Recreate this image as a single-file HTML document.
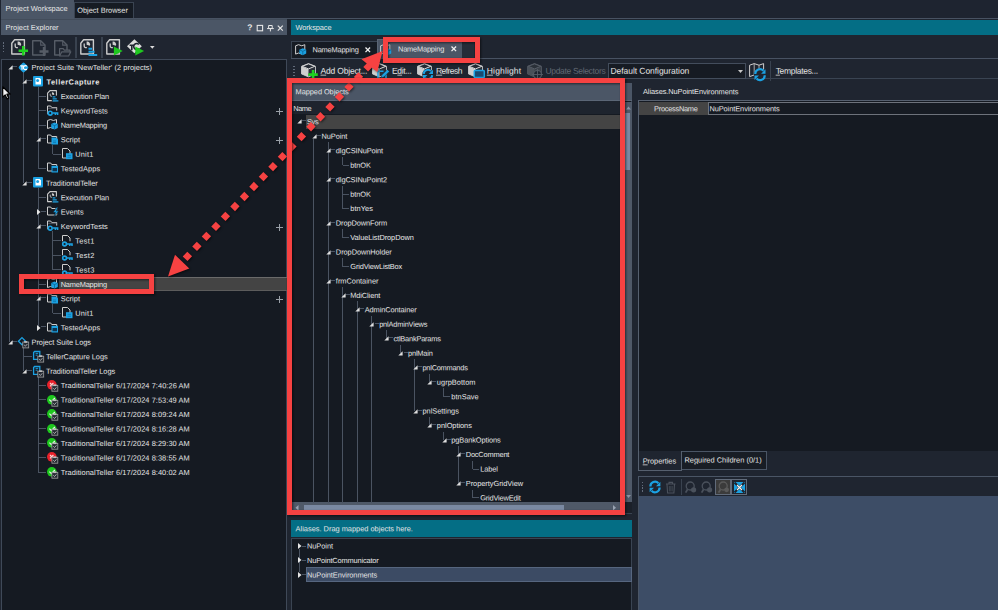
<!DOCTYPE html>
<html><head><meta charset="utf-8"><title>Project Workspace</title>
<style>
html,body{margin:0;padding:0}
body{width:998px;height:610px;overflow:hidden;background:#1f2530;position:relative;font-family:"Liberation Sans",sans-serif;color:#e6e6e6}
div{position:absolute;box-sizing:border-box}
svg{position:absolute;overflow:visible}
text{font-family:"Liberation Sans",sans-serif;white-space:pre}
u{text-decoration:underline;text-underline-offset:1px}
</style></head><body>

<div style="left:0px;top:0px;width:998px;height:19px;background:#1e2430;"></div>
<div style="left:1px;top:0px;width:73px;height:20px;background:#4b5666;"></div>
<div style="left:74px;top:2px;width:60px;height:17px;background:#161b23;border:1px solid #3a4452;border-bottom:none;"></div>
<div style="left:74px;top:18px;width:924px;height:1px;background:#485262;"></div>
<div style="left:1px;top:19px;width:286px;height:1px;background:#424c5a;"></div>
<svg style="left:5px;top:1px" width="67" height="16"><text x="0.6" y="9.9" font-size="7.4" fill="#e6e6e6" transform="rotate(0.03 0.6 9.9)" textLength="62.1">Project Workspace</text></svg>
<svg style="left:77px;top:3px" width="55" height="16"><text x="0.2" y="9.8" font-size="7.4" fill="#e6e6e6" transform="rotate(0.03 0.2 9.8)" textLength="50.7">Object Browser</text></svg>
<div style="left:1px;top:20px;width:286px;height:15px;background:#4b5666;"></div>
<svg style="left:5px;top:21px" width="57" height="16"><text x="0.6" y="9.1" font-size="7.4" fill="#e6e6e6" transform="rotate(0.03 0.6 9.1)" textLength="52.9">Project Explorer</text></svg>
<svg style="left:247px;top:20px" width="10" height="16"><text x="0.3" y="10.3" font-size="8.5" fill="#e6e6e6" transform="rotate(0.03 0.3 10.3)" font-weight="bold">?</text></svg>
<svg style="left:256px;top:24px" width="32" height="9" viewBox="0 0 32 9"><rect x="1.2" y="1.4" width="5.4" height="5.4" fill="none" stroke="#e6e6e6" stroke-width="1.1"/><path d="M12.6 1.5h3.6v3h-3.6zM11 4.6h6.8M14.4 4.6v2.8" fill="none" stroke="#e6e6e6" stroke-width="1"/><path d="M21.8 1.6l5 5M26.8 1.6l-5 5" stroke="#e6e6e6" stroke-width="1.2"/></svg>
<div style="left:1px;top:59px;width:286px;height:552px;background:#151a22;border:1px solid #3f4958;"></div>
<div style="left:59px;top:277px;width:228px;height:14px;background:#444444;border-top:1px solid #6a6a6a;border-bottom:1px solid #5c5c5c;"></div>
<div style="left:9px;top:70px;width:1px;height:272px;background:#4a5361;"></div>
<div style="left:23px;top:72px;width:1px;height:111px;background:#4a5361;"></div>
<div style="left:23px;top:347px;width:1px;height:24px;background:#4a5361;"></div>
<div style="left:38px;top:87px;width:1px;height:82px;background:#4a5361;"></div>
<div style="left:38px;top:188px;width:1px;height:140px;background:#4a5361;"></div>
<div style="left:38px;top:376px;width:1px;height:96px;background:#4a5361;"></div>
<div style="left:52px;top:145px;width:1px;height:9px;background:#4a5361;"></div>
<div style="left:52px;top:231px;width:1px;height:39px;background:#4a5361;"></div>
<div style="left:52px;top:304px;width:1px;height:9px;background:#4a5361;"></div>
<div style="left:12px;top:66px;width:5px;height:1px;background:#4a5361;"></div>
<svg style="left:7.7px;top:64.9px" width="5" height="5" viewBox="0 0 5 5"><path d="M4.6 0.2v4.3h-4.3z" fill="#dedede"/></svg>
<svg style="left:17.8px;top:61.7px" width="12" height="12" viewBox="0 0 12 12"><rect x="1.6" y="1.6" width="7.8" height="7.8" rx="1.7" transform="rotate(45 5.5 5.5)" fill="#1ba1e2"/><path d="M2.3 3.9h3.4M4 3.9v3.9" stroke="#fff" stroke-width="1.2" fill="none"/><path d="M8.9 4.4a2 2 0 1 0 0 2.6" stroke="#fff" stroke-width="1.2" fill="none"/></svg>
<svg style="left:31px;top:60px" width="125" height="16"><text x="0.5" y="10.0" font-size="7.4" fill="#e6e6e6" transform="rotate(0.03 0.5 10.0)" textLength="120.6">Project Suite 'NewTeller' (2 projects)</text></svg>
<div style="left:27px;top:80px;width:5px;height:1px;background:#4a5361;"></div>
<svg style="left:22.0px;top:79.4px" width="5" height="5" viewBox="0 0 5 5"><path d="M4.6 0.2v4.3h-4.3z" fill="#dedede"/></svg>
<svg style="left:33px;top:75.7px" width="12" height="12" viewBox="0 0 12 12"><rect x="0" y="0" width="10" height="10.5" rx="1" fill="#1ba1e2"/><path d="M2.5 2h4.2l1.3 1.3v5.2h-5.5z" fill="#fff"/><circle cx="4.6" cy="4.4" r="1.5" fill="#1ba1e2"/></svg>
<svg style="left:46px;top:75px" width="57" height="16"><text x="0.6" y="9.46" font-size="7.4" fill="#e6e6e6" transform="rotate(0.03 0.6 9.46)" font-weight="bold" textLength="52.7">TellerCapture</text></svg>
<div style="left:38px;top:96px;width:8px;height:1px;background:#4a5361;"></div>
<svg style="left:47px;top:90.1px" width="12" height="12" viewBox="0 0 12 12"><path d="M3 0.6h6.4v10h-8.8v-7.4z" fill="none" stroke="#cdcdcd" stroke-width="1.1" stroke-linejoin="round"/><path d="M3.2 3.6v1.6a1.3 1.3 0 0 0 1.8 1" stroke="#cdcdcd" fill="none" stroke-width="0.9"/><path d="M4.9 2.3a2 2 0 0 1 2.2 2.8l-2.2-.7z" fill="#cdcdcd"/><rect x="4.8" y="5.6" width="7" height="6" fill="#151a22"/><path d="M5.6 6.8h2.8M5.6 8.8h4.2M5.6 10.8h5.8" stroke="#1ba1e2" stroke-width="1.3"/></svg>
<svg style="left:60px;top:89px" width="53" height="16"><text x="0.7" y="9.92" font-size="7.4" fill="#e6e6e6" transform="rotate(0.03 0.7 9.92)" textLength="48.5">Execution Plan</text></svg>
<div style="left:38px;top:110px;width:8px;height:1px;background:#4a5361;"></div>
<svg style="left:47px;top:104.6px" width="12" height="12" viewBox="0 0 12 12"><path d="M0.5 1h3.2l1 1.5h5v6.5h-9.2z" fill="none" stroke="#cdcdcd" stroke-width="1"/><path d="M1.2 3.4h8" stroke="#4a4f58" stroke-width="1.4"/><rect x="0.8" y="5.6" width="10.4" height="5.2" fill="#151a22"/><circle cx="3.2" cy="8.2" r="1.9" fill="none" stroke="#1ba1e2" stroke-width="1.6"/><path d="M5.4 8.1h6M8.4 8.1v2M10.6 8.1v2" stroke="#1ba1e2" stroke-width="1.5"/></svg>
<svg style="left:60px;top:104px" width="52" height="16"><text x="0.7" y="9.38" font-size="7.4" fill="#e6e6e6" transform="rotate(0.03 0.7 9.38)" textLength="47.1">KeywordTests</text></svg>
<svg style="left:276px;top:107.8px" width="7" height="7" viewBox="0 0 7 7"><path d="M3.5 0v7M0 3.5h7" stroke="#9aa0a8" stroke-width="1"/></svg>
<div style="left:38px;top:125px;width:8px;height:1px;background:#4a5361;"></div>
<svg style="left:47px;top:119.0px" width="12" height="12" viewBox="0 0 12 12"><path d="M0.5 1.5l3-1 3 1 3-1v8l-3 1-3-1-3 1z" fill="none" stroke="#cdcdcd" stroke-width="1"/><path d="M7.5 3.6l3.3 1.4v4l-3.3 1.6-3.3-1.6v-4z" fill="#1ba1e2"/><path d="M4.4 5.2l3.1 1.4 3.1-1.4M7.5 6.6v3.6" stroke="#0b5e8c" stroke-width="0.7" fill="none"/></svg>
<svg style="left:60px;top:118px" width="51" height="16"><text x="0.7" y="9.84" font-size="7.4" fill="#e6e6e6" transform="rotate(0.03 0.7 9.84)" textLength="46.3">NameMapping</text></svg>
<div style="left:41px;top:138px;width:5px;height:1px;background:#4a5361;"></div>
<svg style="left:36.3px;top:137.2px" width="5" height="5" viewBox="0 0 5 5"><path d="M4.6 0.2v4.3h-4.3z" fill="#dedede"/></svg>
<svg style="left:47px;top:133.5px" width="12" height="12" viewBox="0 0 12 12"><path d="M0.5 1h3.2l1 1.5h5v6.5h-9.2z" fill="none" stroke="#cdcdcd" stroke-width="1"/><path d="M4.5 3.5h4.5l2 1.8v5.2h-6.5z" fill="#1ba1e2"/><path d="M6 7h3M6 8.6h3" stroke="#0b6ea3" stroke-width="0.7"/></svg>
<svg style="left:60px;top:133px" width="24" height="16"><text x="0.7" y="9.3" font-size="7.4" fill="#e6e6e6" transform="rotate(0.03 0.7 9.3)" textLength="19.4">Script</text></svg>
<svg style="left:276px;top:136.7px" width="7" height="7" viewBox="0 0 7 7"><path d="M3.5 0v7M0 3.5h7" stroke="#9aa0a8" stroke-width="1"/></svg>
<div style="left:53px;top:154px;width:8px;height:1px;background:#4a5361;"></div>
<svg style="left:62px;top:148.0px" width="12" height="12" viewBox="0 0 12 12"><path d="M0.5 0.5h5l2.5 2.5v7h-7.5z" fill="none" stroke="#cdcdcd" stroke-width="1"/><rect x="4" y="5.2" width="6.5" height="6" fill="#1ba1e2"/><path d="M5.5 7.3h3.5M5.5 9.2h3.5" stroke="#0b6ea3" stroke-width="0.7"/></svg>
<svg style="left:75px;top:147px" width="22" height="16"><text x="0.3" y="9.76" font-size="7.4" fill="#e6e6e6" transform="rotate(0.03 0.3 9.76)" textLength="18">Unit1</text></svg>
<div style="left:38px;top:168px;width:8px;height:1px;background:#4a5361;"></div>
<svg style="left:47px;top:162.4px" width="12" height="12" viewBox="0 0 12 12"><path d="M0.5 1h3.2l1 1.5h5v6.5h-9.2z" fill="none" stroke="#cdcdcd" stroke-width="1"/><rect x="4.5" y="3.8" width="6.5" height="6.7" fill="#1ba1e2"/><rect x="5.5" y="6" width="4.5" height="3.3" fill="#12334d"/></svg>
<svg style="left:60px;top:162px" width="44" height="16"><text x="0.7" y="9.22" font-size="7.4" fill="#e6e6e6" transform="rotate(0.03 0.7 9.22)" textLength="39.4">TestedApps</text></svg>
<div style="left:27px;top:182px;width:5px;height:1px;background:#4a5361;"></div>
<svg style="left:22.0px;top:180.6px" width="5" height="5" viewBox="0 0 5 5"><path d="M4.6 0.2v4.3h-4.3z" fill="#dedede"/></svg>
<svg style="left:33px;top:176.9px" width="12" height="12" viewBox="0 0 12 12"><rect x="0" y="0" width="10" height="10.5" rx="1" fill="#1ba1e2"/><path d="M2.5 2h4.2l1.3 1.3v5.2h-5.5z" fill="#fff"/><circle cx="4.6" cy="4.4" r="1.5" fill="#1ba1e2"/></svg>
<svg style="left:46px;top:176px" width="56" height="16"><text x="0.1" y="9.68" font-size="7.4" fill="#e6e6e6" transform="rotate(0.03 0.1 9.68)" textLength="51.7">TraditionalTeller</text></svg>
<div style="left:38px;top:197px;width:8px;height:1px;background:#4a5361;"></div>
<svg style="left:47px;top:191.3px" width="12" height="12" viewBox="0 0 12 12"><path d="M3 0.6h6.4v10h-8.8v-7.4z" fill="none" stroke="#cdcdcd" stroke-width="1.1" stroke-linejoin="round"/><path d="M3.2 3.6v1.6a1.3 1.3 0 0 0 1.8 1" stroke="#cdcdcd" fill="none" stroke-width="0.9"/><path d="M4.9 2.3a2 2 0 0 1 2.2 2.8l-2.2-.7z" fill="#cdcdcd"/><rect x="4.8" y="5.6" width="7" height="6" fill="#151a22"/><path d="M5.6 6.8h2.8M5.6 8.8h4.2M5.6 10.8h5.8" stroke="#1ba1e2" stroke-width="1.3"/></svg>
<svg style="left:60px;top:191px" width="53" height="16"><text x="0.7" y="9.14" font-size="7.4" fill="#e6e6e6" transform="rotate(0.03 0.7 9.14)" textLength="48.5">Execution Plan</text></svg>
<div style="left:41px;top:211px;width:5px;height:1px;background:#4a5361;"></div>
<svg style="left:37.0px;top:209.0px" width="4" height="6" viewBox="0 0 4 6"><path d="M0 0l3.5 3-3.5 3z" fill="#e6e6e6"/></svg>
<svg style="left:47px;top:205.8px" width="12" height="12" viewBox="0 0 12 12"><path d="M0.5 1h3.2l1 1.5h5v6.5h-9.2z" fill="none" stroke="#cdcdcd" stroke-width="1"/><path d="M9.6 1.2l-3.6 5.4h2.4l-1.8 5 5.2-6.6h-2.5l1.9-3.8z" fill="#1ba1e2" stroke="#151a22" stroke-width="0.6"/></svg>
<svg style="left:60px;top:205px" width="27" height="16"><text x="0.7" y="9.6" font-size="7.4" fill="#e6e6e6" transform="rotate(0.03 0.7 9.6)" textLength="23">Events</text></svg>
<div style="left:41px;top:225px;width:5px;height:1px;background:#4a5361;"></div>
<svg style="left:36.3px;top:224.0px" width="5" height="5" viewBox="0 0 5 5"><path d="M4.6 0.2v4.3h-4.3z" fill="#dedede"/></svg>
<svg style="left:47px;top:220.3px" width="12" height="12" viewBox="0 0 12 12"><path d="M0.5 1h3.2l1 1.5h5v6.5h-9.2z" fill="none" stroke="#cdcdcd" stroke-width="1"/><path d="M1.2 3.4h8" stroke="#4a4f58" stroke-width="1.4"/><rect x="0.8" y="5.6" width="10.4" height="5.2" fill="#151a22"/><circle cx="3.2" cy="8.2" r="1.9" fill="none" stroke="#1ba1e2" stroke-width="1.6"/><path d="M5.4 8.1h6M8.4 8.1v2M10.6 8.1v2" stroke="#1ba1e2" stroke-width="1.5"/></svg>
<svg style="left:60px;top:219px" width="52" height="16"><text x="0.7" y="10.06" font-size="7.4" fill="#e6e6e6" transform="rotate(0.03 0.7 10.06)" textLength="47.1">KeywordTests</text></svg>
<svg style="left:276px;top:223.5px" width="7" height="7" viewBox="0 0 7 7"><path d="M3.5 0v7M0 3.5h7" stroke="#9aa0a8" stroke-width="1"/></svg>
<div style="left:53px;top:240px;width:8px;height:1px;background:#4a5361;"></div>
<svg style="left:62px;top:234.7px" width="12" height="12" viewBox="0 0 12 12"><path d="M0.5 0.5h5l2.5 2.5v7h-7.5z" fill="none" stroke="#cdcdcd" stroke-width="1"/><rect x="0" y="6.3" width="10.8" height="5" fill="#151a22"/><circle cx="2.6" cy="9" r="1.9" fill="none" stroke="#1ba1e2" stroke-width="1.6"/><path d="M4.8 8.9h6M7.8 8.9v2M10 8.9v2" stroke="#1ba1e2" stroke-width="1.5"/></svg>
<svg style="left:75px;top:234px" width="23" height="16"><text x="0.3" y="9.52" font-size="7.4" fill="#e6e6e6" transform="rotate(0.03 0.3 9.52)" textLength="19">Test1</text></svg>
<div style="left:53px;top:255px;width:8px;height:1px;background:#4a5361;"></div>
<svg style="left:62px;top:249.2px" width="12" height="12" viewBox="0 0 12 12"><path d="M0.5 0.5h5l2.5 2.5v7h-7.5z" fill="none" stroke="#cdcdcd" stroke-width="1"/><rect x="0" y="6.3" width="10.8" height="5" fill="#151a22"/><circle cx="2.6" cy="9" r="1.9" fill="none" stroke="#1ba1e2" stroke-width="1.6"/><path d="M4.8 8.9h6M7.8 8.9v2M10 8.9v2" stroke="#1ba1e2" stroke-width="1.5"/></svg>
<svg style="left:75px;top:248px" width="23" height="16"><text x="0.3" y="9.98" font-size="7.4" fill="#e6e6e6" transform="rotate(0.03 0.3 9.98)" textLength="19">Test2</text></svg>
<div style="left:53px;top:269px;width:8px;height:1px;background:#4a5361;"></div>
<svg style="left:62px;top:263.6px" width="12" height="12" viewBox="0 0 12 12"><path d="M0.5 0.5h5l2.5 2.5v7h-7.5z" fill="none" stroke="#cdcdcd" stroke-width="1"/><rect x="0" y="6.3" width="10.8" height="5" fill="#151a22"/><circle cx="2.6" cy="9" r="1.9" fill="none" stroke="#1ba1e2" stroke-width="1.6"/><path d="M4.8 8.9h6M7.8 8.9v2M10 8.9v2" stroke="#1ba1e2" stroke-width="1.5"/></svg>
<svg style="left:75px;top:263px" width="23" height="16"><text x="0.3" y="9.44" font-size="7.4" fill="#e6e6e6" transform="rotate(0.03 0.3 9.44)" textLength="19">Test3</text></svg>
<div style="left:38px;top:284px;width:8px;height:1px;background:#4a5361;"></div>
<svg style="left:47px;top:278.1px" width="12" height="12" viewBox="0 0 12 12"><path d="M0.5 1.5l3-1 3 1 3-1v8l-3 1-3-1-3 1z" fill="none" stroke="#cdcdcd" stroke-width="1"/><path d="M7.5 3.6l3.3 1.4v4l-3.3 1.6-3.3-1.6v-4z" fill="#1ba1e2"/><path d="M4.4 5.2l3.1 1.4 3.1-1.4M7.5 6.6v3.6" stroke="#0b5e8c" stroke-width="0.7" fill="none"/></svg>
<svg style="left:60px;top:277px" width="51" height="16"><text x="0.7" y="9.9" font-size="7.4" fill="#e6e6e6" transform="rotate(0.03 0.7 9.9)" textLength="46.3">NameMapping</text></svg>
<div style="left:41px;top:297px;width:5px;height:1px;background:#4a5361;"></div>
<svg style="left:36.3px;top:296.3px" width="5" height="5" viewBox="0 0 5 5"><path d="M4.6 0.2v4.3h-4.3z" fill="#dedede"/></svg>
<svg style="left:47px;top:292.6px" width="12" height="12" viewBox="0 0 12 12"><path d="M0.5 1h3.2l1 1.5h5v6.5h-9.2z" fill="none" stroke="#cdcdcd" stroke-width="1"/><path d="M4.5 3.5h4.5l2 1.8v5.2h-6.5z" fill="#1ba1e2"/><path d="M6 7h3M6 8.6h3" stroke="#0b6ea3" stroke-width="0.7"/></svg>
<svg style="left:60px;top:292px" width="24" height="16"><text x="0.7" y="9.36" font-size="7.4" fill="#e6e6e6" transform="rotate(0.03 0.7 9.36)" textLength="19.4">Script</text></svg>
<svg style="left:276px;top:295.8px" width="7" height="7" viewBox="0 0 7 7"><path d="M3.5 0v7M0 3.5h7" stroke="#9aa0a8" stroke-width="1"/></svg>
<div style="left:53px;top:313px;width:8px;height:1px;background:#4a5361;"></div>
<svg style="left:62px;top:307.0px" width="12" height="12" viewBox="0 0 12 12"><path d="M0.5 0.5h5l2.5 2.5v7h-7.5z" fill="none" stroke="#cdcdcd" stroke-width="1"/><rect x="4" y="5.2" width="6.5" height="6" fill="#1ba1e2"/><path d="M5.5 7.3h3.5M5.5 9.2h3.5" stroke="#0b6ea3" stroke-width="0.7"/></svg>
<svg style="left:75px;top:306px" width="22" height="16"><text x="0.3" y="9.82" font-size="7.4" fill="#e6e6e6" transform="rotate(0.03 0.3 9.82)" textLength="18">Unit1</text></svg>
<div style="left:41px;top:326px;width:5px;height:1px;background:#4a5361;"></div>
<svg style="left:37.0px;top:324.7px" width="4" height="6" viewBox="0 0 4 6"><path d="M0 0l3.5 3-3.5 3z" fill="#e6e6e6"/></svg>
<svg style="left:47px;top:321.5px" width="12" height="12" viewBox="0 0 12 12"><path d="M0.5 1h3.2l1 1.5h5v6.5h-9.2z" fill="none" stroke="#cdcdcd" stroke-width="1"/><rect x="4.5" y="3.8" width="6.5" height="6.7" fill="#1ba1e2"/><rect x="5.5" y="6" width="4.5" height="3.3" fill="#12334d"/></svg>
<svg style="left:60px;top:321px" width="44" height="16"><text x="0.7" y="9.28" font-size="7.4" fill="#e6e6e6" transform="rotate(0.03 0.7 9.28)" textLength="39.4">TestedApps</text></svg>
<div style="left:12px;top:341px;width:5px;height:1px;background:#4a5361;"></div>
<svg style="left:7.7px;top:339.6px" width="5" height="5" viewBox="0 0 5 5"><path d="M4.6 0.2v4.3h-4.3z" fill="#dedede"/></svg>
<svg style="left:17.8px;top:336.7px" width="12" height="12" viewBox="0 0 12 12"><path d="M4 0.6l3.6 3.6-3.6 3.6-3.6-3.6z" fill="none" stroke="#1ba1e2" stroke-width="1.3"/><rect x="4.8" y="5" width="5.9" height="5.9" fill="#262b33" stroke="#a0a0a0" stroke-width="0.8"/><rect x="6.2" y="4.1" width="3.1" height="1.7" fill="#bdbdbd"/><path d="M6.2 8l1.2 1.2 1.9-2.1" stroke="#d0d0d0" stroke-width="0.8" fill="none"/></svg>
<svg style="left:31px;top:335px" width="64" height="16"><text x="0.5" y="9.74" font-size="7.4" fill="#e6e6e6" transform="rotate(0.03 0.5 9.74)" textLength="59.5">Project Suite Logs</text></svg>
<div style="left:24px;top:356px;width:8px;height:1px;background:#4a5361;"></div>
<svg style="left:33px;top:351.2px" width="12" height="12" viewBox="0 0 12 12"><path d="M0.6 1.5l1-1h5.2v7.8h-6.2z" fill="none" stroke="#1ba1e2" stroke-width="1.3"/><path d="M2.6 2.4h2.6M2.6 4.2h2" stroke="#1ba1e2" stroke-width="0.9"/><rect x="4.8" y="5.2" width="5.9" height="5.9" fill="#262b33" stroke="#a0a0a0" stroke-width="0.8"/><rect x="6.2" y="4.3" width="3.1" height="1.7" fill="#bdbdbd"/><path d="M6.2 8.2l1.2 1.2 1.9-2.1" stroke="#d0d0d0" stroke-width="0.8" fill="none"/></svg>
<svg style="left:46px;top:350px" width="66" height="16"><text x="0.1" y="9.2" font-size="7.4" fill="#e6e6e6" transform="rotate(0.03 0.1 9.2)" textLength="61.6">TellerCapture Logs</text></svg>
<div style="left:27px;top:370px;width:5px;height:1px;background:#4a5361;"></div>
<svg style="left:22.0px;top:368.6px" width="5" height="5" viewBox="0 0 5 5"><path d="M4.6 0.2v4.3h-4.3z" fill="#dedede"/></svg>
<svg style="left:33px;top:365.7px" width="12" height="12" viewBox="0 0 12 12"><path d="M0.6 1.5l1-1h5.2v7.8h-6.2z" fill="none" stroke="#1ba1e2" stroke-width="1.3"/><path d="M2.6 2.4h2.6M2.6 4.2h2" stroke="#1ba1e2" stroke-width="0.9"/><rect x="4.8" y="5.2" width="5.9" height="5.9" fill="#262b33" stroke="#a0a0a0" stroke-width="0.8"/><rect x="6.2" y="4.3" width="3.1" height="1.7" fill="#bdbdbd"/><path d="M6.2 8.2l1.2 1.2 1.9-2.1" stroke="#d0d0d0" stroke-width="0.8" fill="none"/></svg>
<svg style="left:46px;top:364px" width="74" height="16"><text x="0.1" y="9.66" font-size="7.4" fill="#e6e6e6" transform="rotate(0.03 0.1 9.66)" textLength="69.1">TraditionalTeller Logs</text></svg>
<div style="left:38px;top:385px;width:8px;height:1px;background:#4a5361;"></div>
<svg style="left:47px;top:380.1px" width="12" height="12" viewBox="0 0 12 12"><circle cx="4.8" cy="4.8" r="4.8" fill="#e8202a"/><path d="M3 3l3.4 3.4M6.4 3l-3.4 3.4" stroke="#ffdada" stroke-width="1.1" fill="none"/><rect x="4.8999999999999995" y="5.3" width="5.9" height="5.9" fill="#262b33" stroke="#a0a0a0" stroke-width="0.8"/><rect x="6.3" y="4.3999999999999995" width="3.1" height="1.7" fill="#bdbdbd"/><path d="M6.3 8.3l1.2 1.2 1.9-2.1" stroke="#d0d0d0" stroke-width="0.8" fill="none"/></svg>
<svg style="left:60px;top:379px" width="133" height="16"><text x="0.7" y="9.12" font-size="7.4" fill="#e6e6e6" transform="rotate(0.03 0.7 9.12)" textLength="129">TraditionalTeller 6/17/2024 7:40:26 AM</text></svg>
<div style="left:38px;top:399px;width:8px;height:1px;background:#4a5361;"></div>
<svg style="left:47px;top:394.6px" width="12" height="12" viewBox="0 0 12 12"><circle cx="4.8" cy="4.8" r="4.8" fill="#1ec81e"/><path d="M2.4 4.6l2 2 3.4-3.6" stroke="#e8ffe8" stroke-width="1.1" fill="none"/><rect x="4.8999999999999995" y="5.3" width="5.9" height="5.9" fill="#262b33" stroke="#a0a0a0" stroke-width="0.8"/><rect x="6.3" y="4.3999999999999995" width="3.1" height="1.7" fill="#bdbdbd"/><path d="M6.3 8.3l1.2 1.2 1.9-2.1" stroke="#d0d0d0" stroke-width="0.8" fill="none"/></svg>
<svg style="left:60px;top:393px" width="133" height="16"><text x="0.7" y="9.58" font-size="7.4" fill="#e6e6e6" transform="rotate(0.03 0.7 9.58)" textLength="129">TraditionalTeller 6/17/2024 7:53:49 AM</text></svg>
<div style="left:38px;top:414px;width:8px;height:1px;background:#4a5361;"></div>
<svg style="left:47px;top:409.0px" width="12" height="12" viewBox="0 0 12 12"><circle cx="4.8" cy="4.8" r="4.8" fill="#1ec81e"/><path d="M2.4 4.6l2 2 3.4-3.6" stroke="#e8ffe8" stroke-width="1.1" fill="none"/><rect x="4.8999999999999995" y="5.3" width="5.9" height="5.9" fill="#262b33" stroke="#a0a0a0" stroke-width="0.8"/><rect x="6.3" y="4.3999999999999995" width="3.1" height="1.7" fill="#bdbdbd"/><path d="M6.3 8.3l1.2 1.2 1.9-2.1" stroke="#d0d0d0" stroke-width="0.8" fill="none"/></svg>
<svg style="left:60px;top:407px" width="133" height="16"><text x="0.7" y="10.04" font-size="7.4" fill="#e6e6e6" transform="rotate(0.03 0.7 10.04)" textLength="129">TraditionalTeller 6/17/2024 8:09:24 AM</text></svg>
<div style="left:38px;top:428px;width:8px;height:1px;background:#4a5361;"></div>
<svg style="left:47px;top:423.5px" width="12" height="12" viewBox="0 0 12 12"><circle cx="4.8" cy="4.8" r="4.8" fill="#1ec81e"/><path d="M2.4 4.6l2 2 3.4-3.6" stroke="#e8ffe8" stroke-width="1.1" fill="none"/><rect x="4.8999999999999995" y="5.3" width="5.9" height="5.9" fill="#262b33" stroke="#a0a0a0" stroke-width="0.8"/><rect x="6.3" y="4.3999999999999995" width="3.1" height="1.7" fill="#bdbdbd"/><path d="M6.3 8.3l1.2 1.2 1.9-2.1" stroke="#d0d0d0" stroke-width="0.8" fill="none"/></svg>
<svg style="left:60px;top:422px" width="133" height="16"><text x="0.7" y="9.5" font-size="7.4" fill="#e6e6e6" transform="rotate(0.03 0.7 9.5)" textLength="129">TraditionalTeller 6/17/2024 8:16:28 AM</text></svg>
<div style="left:38px;top:443px;width:8px;height:1px;background:#4a5361;"></div>
<svg style="left:47px;top:438.0px" width="12" height="12" viewBox="0 0 12 12"><circle cx="4.8" cy="4.8" r="4.8" fill="#1ec81e"/><path d="M2.4 4.6l2 2 3.4-3.6" stroke="#e8ffe8" stroke-width="1.1" fill="none"/><rect x="4.8999999999999995" y="5.3" width="5.9" height="5.9" fill="#262b33" stroke="#a0a0a0" stroke-width="0.8"/><rect x="6.3" y="4.3999999999999995" width="3.1" height="1.7" fill="#bdbdbd"/><path d="M6.3 8.3l1.2 1.2 1.9-2.1" stroke="#d0d0d0" stroke-width="0.8" fill="none"/></svg>
<svg style="left:60px;top:436px" width="133" height="16"><text x="0.7" y="9.96" font-size="7.4" fill="#e6e6e6" transform="rotate(0.03 0.7 9.96)" textLength="129">TraditionalTeller 6/17/2024 8:29:30 AM</text></svg>
<div style="left:38px;top:457px;width:8px;height:1px;background:#4a5361;"></div>
<svg style="left:47px;top:452.4px" width="12" height="12" viewBox="0 0 12 12"><circle cx="4.8" cy="4.8" r="4.8" fill="#e8202a"/><path d="M3 3l3.4 3.4M6.4 3l-3.4 3.4" stroke="#ffdada" stroke-width="1.1" fill="none"/><rect x="4.8999999999999995" y="5.3" width="5.9" height="5.9" fill="#262b33" stroke="#a0a0a0" stroke-width="0.8"/><rect x="6.3" y="4.3999999999999995" width="3.1" height="1.7" fill="#bdbdbd"/><path d="M6.3 8.3l1.2 1.2 1.9-2.1" stroke="#d0d0d0" stroke-width="0.8" fill="none"/></svg>
<svg style="left:60px;top:451px" width="133" height="16"><text x="0.7" y="9.42" font-size="7.4" fill="#e6e6e6" transform="rotate(0.03 0.7 9.42)" textLength="129">TraditionalTeller 6/17/2024 8:38:55 AM</text></svg>
<div style="left:38px;top:472px;width:8px;height:1px;background:#4a5361;"></div>
<svg style="left:47px;top:466.9px" width="12" height="12" viewBox="0 0 12 12"><circle cx="4.8" cy="4.8" r="4.8" fill="#1ec81e"/><path d="M2.4 4.6l2 2 3.4-3.6" stroke="#e8ffe8" stroke-width="1.1" fill="none"/><rect x="4.8999999999999995" y="5.3" width="5.9" height="5.9" fill="#262b33" stroke="#a0a0a0" stroke-width="0.8"/><rect x="6.3" y="4.3999999999999995" width="3.1" height="1.7" fill="#bdbdbd"/><path d="M6.3 8.3l1.2 1.2 1.9-2.1" stroke="#d0d0d0" stroke-width="0.8" fill="none"/></svg>
<svg style="left:60px;top:465px" width="133" height="16"><text x="0.7" y="9.88" font-size="7.4" fill="#e6e6e6" transform="rotate(0.03 0.7 9.88)" textLength="129">TraditionalTeller 6/17/2024 8:40:02 AM</text></svg>
<div style="left:291px;top:20px;width:707px;height:15px;background:#046e85;"></div>
<svg style="left:295px;top:21px" width="41" height="16"><text x="0.5" y="9.1" font-size="7.4" fill="#e6e6e6" transform="rotate(0.03 0.5 9.1)" textLength="36.1">Workspace</text></svg>
<div style="left:291px;top:58px;width:707px;height:1px;background:#485262;"></div>
<div style="left:291px;top:41px;width:87px;height:17px;background:#161b23;border:1px solid #3a4452;border-bottom:none;"></div>
<svg style="left:312px;top:43px" width="51" height="16"><text x="0.5" y="9.3" font-size="7.4" fill="#e6e6e6" transform="rotate(0.03 0.5 9.3)" textLength="46.3">NameMapping</text></svg>
<div style="left:377px;top:39px;width:85px;height:20px;background:#4b5666;border-left:1px solid #5a6575;border-top:1px solid #5a6575;"></div>
<svg style="left:398px;top:42px" width="51" height="16"><text x="0" y="9.6" font-size="7.4" fill="#e6e6e6" transform="rotate(0.03 0 9.6)" textLength="46.3">NameMapping</text></svg>
<div style="left:462px;top:42px;width:12px;height:16px;background:#252c38;"></div>
<div style="left:291px;top:78px;width:707px;height:1px;background:#3a4452;"></div>
<div style="left:3px;top:42.3px;width:1.4px;height:1.4px;background:#626b7a;"></div>
<div style="left:3px;top:45.199999999999996px;width:1.4px;height:1.4px;background:#626b7a;"></div>
<div style="left:3px;top:48.099999999999994px;width:1.4px;height:1.4px;background:#626b7a;"></div>
<div style="left:3px;top:51.0px;width:1.4px;height:1.4px;background:#626b7a;"></div>
<svg style="left:10.5px;top:39px" width="18" height="18" viewBox="0 0 18 18"><path d="M3.6 0.8h9.8v14.2h-12.6v-10.8z" fill="none" stroke="#cdcdcd" stroke-width="1.4" stroke-linejoin="round"/><path d="M4.2 4.6v2.4a1.7 1.7 0 0 0 2.6 1.4" fill="none" stroke="#cdcdcd" stroke-width="1.3"/><path d="M6.6 2.6a3 3 0 0 1 3.3 4.2l-3.3-1z" fill="#cdcdcd"/><path d="M7.6000000000000005 11.8h9.4M12.3 7.1000000000000005v9.4" stroke="#1fd11f" stroke-width="2.6"/></svg>
<svg style="left:32.3px;top:39.5px" width="18" height="18" viewBox="0 0 18 18"><path d="M0.7 0.8h8l4.3 4.3v9.9h-12.3z" fill="none" stroke="#565c66" stroke-width="1.4" stroke-linejoin="round"/><path d="M8.7 0.8v4.3h4.3" fill="none" stroke="#565c66" stroke-width="1.1"/><rect x="7" y="7" width="10" height="10" fill="#1f2530" opacity="0.0"/><path d="M7.5 11.5h9.0M12 7.0v9.0" stroke="#565c66" stroke-width="2.4"/></svg>
<svg style="left:53.8px;top:39.5px" width="18" height="18" viewBox="0 0 18 18"><path d="M0.7 0.8h8l4.3 4.3v9.9h-12.3z" fill="none" stroke="#565c66" stroke-width="1.4" stroke-linejoin="round"/><path d="M8.7 0.8v4.3h4.3" fill="none" stroke="#565c66" stroke-width="1.1"/><path d="M5.6 16v-7.3h3.6l1.1 1.4h5.6v1.7" fill="#1f2530" stroke="#565c66" stroke-width="1.2" stroke-linejoin="round"/><path d="M5.6 16l2.2-4.2h9l-2.2 4.2z" fill="#1f2530" stroke="#565c66" stroke-width="1.2" stroke-linejoin="round"/></svg>
<div style="left:75px;top:37px;width:1.5px;height:20.5px;background:#39424f;"></div>
<svg style="left:79.5px;top:39px" width="18" height="18" viewBox="0 0 18 18"><path d="M3.6 0.8h9.8v14.2h-12.6v-10.8z" fill="none" stroke="#cdcdcd" stroke-width="1.4" stroke-linejoin="round"/><path d="M4.2 4.6v2.4a1.7 1.7 0 0 0 2.6 1.4" fill="none" stroke="#cdcdcd" stroke-width="1.3"/><path d="M6.6 2.6a3 3 0 0 1 3.3 4.2l-3.3-1z" fill="#cdcdcd"/><rect x="7.5" y="8" width="10" height="9" fill="#1f2530" opacity="0"/><path d="M8.5 9.7h3.6M8.5 12.8h6M8.5 16h8.7" stroke="#1ba1e2" stroke-width="1.9"/></svg>
<div style="left:101.3px;top:37px;width:1.5px;height:20.5px;background:#39424f;"></div>
<svg style="left:105.8px;top:39px" width="18" height="18" viewBox="0 0 18 18"><path d="M3.6 0.8h9.8v14.2h-12.6v-10.8z" fill="none" stroke="#cdcdcd" stroke-width="1.4" stroke-linejoin="round"/><path d="M4.2 4.6v2.4a1.7 1.7 0 0 0 2.6 1.4" fill="none" stroke="#cdcdcd" stroke-width="1.3"/><path d="M6.6 2.6a3 3 0 0 1 3.3 4.2l-3.3-1z" fill="#cdcdcd"/><path d="M7.9 7.4v9.2l8.8-4.6z" fill="#1fc81f"/></svg>
<svg style="left:127px;top:39px" width="18" height="18" viewBox="0 0 18 18"><path d="M7.4 0.2l7.4 7-7.4 7-7.4-7z" fill="#dcdcdc"/><path d="M2.6 5.4h4.4v1.5h-1.4v4.3h-1.6v-4.3h-1.4z" fill="#1f2530"/><path d="M11.8 5.6a2.9 2.9 0 1 0 0 3.8" fill="none" stroke="#1f2530" stroke-width="1.5"/><path d="M8.3 7.4v9.2l8.8-4.6z" fill="#1fc81f"/></svg>
<svg style="left:149.7px;top:46px" width="6" height="4" viewBox="0 0 6 4"><path d="M0 0h4.6l-2.3 2.8z" fill="#dcdcdc"/></svg>
<svg style="left:295px;top:43.5px" width="13" height="12" viewBox="0 0 13 12"><path d="M0.6 1.8l3-1.1 3.2 1.1 3-1.1v8.3l-3 1.1-3.2-1.1-3 1.1z" fill="none" stroke="#cdcdcd" stroke-width="1"/><path d="M7.8 4.3l3.4 1.4v3.9l-3.4 1.7-3.4-1.7v-3.9z" fill="#1ba1e2"/><path d="M4.6 5.9l3.2 1.4 3.2-1.4M7.8 7.3v3.8" stroke="#0b5e8c" stroke-width="0.7" fill="none"/></svg>
<svg style="left:365px;top:47.3px" width="6" height="6" viewBox="0 0 6 6"><path d="M0.5 0.5l4.6 4.6M5.1 0.5l-4.6 4.6" stroke="#f0f0f0" stroke-width="1.3"/></svg>
<svg style="left:450.5px;top:46.3px" width="6" height="6" viewBox="0 0 6 6"><path d="M0.5 0.5l4.6 4.6M5.1 0.5l-4.6 4.6" stroke="#f0f0f0" stroke-width="1.3"/></svg>
<svg style="left:379.5px;top:44px" width="13" height="12" viewBox="0 0 13 12"><path d="M0.6 1.8l3-1.1 3.2 1.1 3-1.1v8.3l-3 1.1-3.2-1.1-3 1.1z" fill="none" stroke="#cdcdcd" stroke-width="1"/><path d="M7.8 4.3l3.4 1.4v3.9l-3.4 1.7-3.4-1.7v-3.9z" fill="#1ba1e2"/><path d="M4.6 5.9l3.2 1.4 3.2-1.4M7.8 7.3v3.8" stroke="#0b5e8c" stroke-width="0.7" fill="none"/></svg>
<div style="left:293.2px;top:66.0px;width:1.4px;height:1.4px;background:#626b7a;"></div>
<div style="left:293.2px;top:68.9px;width:1.4px;height:1.4px;background:#626b7a;"></div>
<div style="left:293.2px;top:71.8px;width:1.4px;height:1.4px;background:#626b7a;"></div>
<div style="left:293.2px;top:74.7px;width:1.4px;height:1.4px;background:#626b7a;"></div>
<svg style="left:300.5px;top:62.5px" width="18" height="18" viewBox="0 0 18 18"><path d="M0.5 3.3l7-2.7 7 2.7v7.6l-7 3-7-3z" fill="#2a3039" stroke="#dadada" stroke-width="0.8" stroke-linejoin="round"/><path d="M0.5 3.3l7 2.9v7.7l-7-3z" fill="#cfcfcf"/><path d="M7.5 0.9l6.3 2.4-6.3 2.6-6.3-2.6z" fill="#252b35" stroke="#dadada" stroke-width="1"/><path d="M7.3999999999999995 11.6h9.4M12.1 6.8999999999999995v9.4" stroke="#1fd11f" stroke-width="2.6"/></svg>
<svg style="left:320px;top:64px" width="51" height="16"><text x="0.5" y="9.7" font-size="8.5" fill="#e6e6e6" transform="rotate(0.03 0.5 9.7)" textLength="46.9"><tspan text-decoration="underline">A</tspan>dd Object...</text></svg>
<svg style="left:372px;top:62.5px" width="18" height="18" viewBox="0 0 18 18"><path d="M0.5 3.3l7-2.7 7 2.7v7.6l-7 3-7-3z" fill="#2a3039" stroke="#dadada" stroke-width="0.8" stroke-linejoin="round"/><path d="M0.5 3.3l7 2.9v7.7l-7-3z" fill="#cfcfcf"/><path d="M7.5 0.9l6.3 2.4-6.3 2.6-6.3-2.6z" fill="#252b35" stroke="#dadada" stroke-width="1"/><path d="M6 8.2h5.5M6 8.2v8h8v-4.6" fill="none" stroke="#1ba1e2" stroke-width="1.4"/><path d="M9 14.8l.8-2.8 5.6-5.6 2 2-5.6 5.6z" fill="#1ba1e2" stroke="#1f2530" stroke-width="0.5"/></svg>
<svg style="left:392px;top:64px" width="24" height="16"><text x="0" y="9.7" font-size="8.5" fill="#e6e6e6" transform="rotate(0.03 0 9.7)" textLength="19.9">E<tspan text-decoration="underline">d</tspan>it...</text></svg>
<svg style="left:416.5px;top:62.5px" width="18" height="18" viewBox="0 0 18 18"><path d="M0.5 3.3l7-2.7 7 2.7v7.6l-7 3-7-3z" fill="#2a3039" stroke="#dadada" stroke-width="0.8" stroke-linejoin="round"/><path d="M0.5 3.3l7 2.9v7.7l-7-3z" fill="#cfcfcf"/><path d="M7.5 0.9l6.3 2.4-6.3 2.6-6.3-2.6z" fill="#252b35" stroke="#dadada" stroke-width="1"/><circle cx="11" cy="11.5" r="5.8" fill="#1f2530"/><path d="M6.8 10.9a4.2 4.2 0 0 1 7.2 -2.8000000000000003" fill="none" stroke="#1ba1e2" stroke-width="2"/><path d="M16.0 6.7v4.4h-4.4z" fill="#1ba1e2"/><path d="M15.2 12.1a4.2 4.2 0 0 1 -7.2 2.8000000000000003" fill="none" stroke="#1ba1e2" stroke-width="2"/><path d="M6.0 16.3v-4.4h4.4z" fill="#1ba1e2"/></svg>
<svg style="left:436px;top:64px" width="31" height="16"><text x="0" y="9.7" font-size="8.5" fill="#e6e6e6" transform="rotate(0.03 0 9.7)" textLength="26.4"><tspan text-decoration="underline">R</tspan>efresh</text></svg>
<svg style="left:467.5px;top:62.5px" width="18" height="18" viewBox="0 0 18 18"><path d="M0.5 3.3l7-2.7 7 2.7v7.6l-7 3-7-3z" fill="#2a3039" stroke="#dadada" stroke-width="0.8" stroke-linejoin="round"/><path d="M0.5 3.3l7 2.9v7.7l-7-3z" fill="#cfcfcf"/><path d="M7.5 0.9l6.3 2.4-6.3 2.6-6.3-2.6z" fill="#252b35" stroke="#dadada" stroke-width="1"/><rect x="6.3" y="7.5" width="10" height="7" rx="0.8" fill="#1a4a70" stroke="#1ba1e2" stroke-width="1.5"/><path d="M9 16.3h4.6" stroke="#1ba1e2" stroke-width="1.2"/></svg>
<svg style="left:486px;top:64px" width="39" height="16"><text x="0.8" y="9.7" font-size="8.5" fill="#e6e6e6" transform="rotate(0.03 0.8 9.7)" textLength="34.3"><tspan text-decoration="underline">H</tspan>ighlight</text></svg>
<svg style="left:526.5px;top:62.5px" width="18" height="18" viewBox="0 0 18 18"><path d="M0.5 3.3l7-2.7 7 2.7v7.6l-7 3-7-3z" fill="#3a4048" stroke="#555b65" stroke-width="0.8" stroke-linejoin="round"/><path d="M0.5 3.3l7 2.9v7.7l-7-3z" fill="#4a5058"/><path d="M7.5 0.9l6.3 2.4-6.3 2.6-6.3-2.6z" fill="#2a3038" stroke="#555b65" stroke-width="1"/><circle cx="10.5" cy="11.5" r="4" fill="#1f2530" stroke="#565c66" stroke-width="1.1"/><path d="M10.5 6v11M5 11.5h11" stroke="#565c66" stroke-width="0.9"/></svg>
<svg style="left:545px;top:64px" width="65" height="16"><text x="0.5" y="9.7" font-size="8.5" fill="#626974" transform="rotate(0.03 0.5 9.7)" textLength="60.2">Update Selectors</text></svg>
<div style="left:608px;top:63px;width:138px;height:15.5px;background:#161b23;border:1px solid #434d5c;"></div>
<svg style="left:610px;top:64px" width="83" height="16"><text x="0.5" y="9.7" font-size="8.5" fill="#e6e6e6" transform="rotate(0.03 0.5 9.7)" textLength="78.8">Default Configuration</text></svg>
<svg style="left:737.8px;top:69.7px" width="6" height="4" viewBox="0 0 6 4"><path d="M0 0h5l-2.5 3z" fill="#c8c8c8"/></svg>
<svg style="left:748.5px;top:62.5px" width="18" height="18" viewBox="0 0 18 18"><path d="M0.6 2.2l4.6-1.6 4.8 1.6 4.6-1.6v11.4l-4.6 1.6-4.8-1.6-4.6 1.6z" fill="none" stroke="#cdcdcd" stroke-width="1"/><path d="M5.2 0.6v11.4M10 2.2v4" stroke="#cdcdcd" stroke-width="0.8"/><circle cx="11" cy="11.6" r="6.2" fill="#1f2530"/><path d="M6.3 11.0a4.7 4.7 0 0 1 8.200000000000001 -3.3000000000000003" fill="none" stroke="#1ba1e2" stroke-width="2.2"/><path d="M16.5 6.3v4.4h-4.4z" fill="#1ba1e2"/><path d="M15.7 12.2a4.7 4.7 0 0 1 -8.200000000000001 3.3000000000000003" fill="none" stroke="#1ba1e2" stroke-width="2.2"/><path d="M5.5 16.900000000000002v-4.4h4.4z" fill="#1ba1e2"/></svg>
<div style="left:770px;top:61px;width:1px;height:20px;background:#39424f;"></div>
<svg style="left:775px;top:64px" width="47" height="16"><text x="0.7" y="9.7" font-size="8.5" fill="#e6e6e6" transform="rotate(0.03 0.7 9.7)" textLength="42.4"><tspan text-decoration="underline">T</tspan>emplates...</text></svg>
<div style="left:291px;top:83px;width:341px;height:431px;background:#151a22;border:1px solid #3a4452;"></div>
<div style="left:292px;top:83px;width:340px;height:17px;background:#4b5666;"></div>
<svg style="left:295px;top:85px" width="57" height="16"><text x="0.6" y="9.3" font-size="7.4" fill="#e6e6e6" transform="rotate(0.03 0.6 9.3)" textLength="53">Mapped Objects</text></svg>
<div style="left:292px;top:100px;width:340px;height:1px;background:#5b6676;"></div>
<div style="left:292px;top:101px;width:333px;height:13px;background:#1e242e;"></div>
<svg style="left:293px;top:101px" width="23" height="16"><text x="0.3" y="9.9" font-size="7.4" fill="#e6e6e6" transform="rotate(0.03 0.3 9.9)" textLength="18.4">Name</text></svg>
<div style="left:306px;top:115px;width:320px;height:14px;background:#444444;"></div>
<div style="left:625px;top:102px;width:7px;height:400px;background:#4f5968;"></div>
<div style="left:625px;top:113px;width:5px;height:57px;background:#7a89a2;"></div>
<svg style="left:626px;top:106px" width="6" height="4" viewBox="0 0 6 4"><path d="M0 3.5l2.5-3 2.5 3z" fill="#8a94a4"/></svg>
<svg style="left:626px;top:495px" width="6" height="4" viewBox="0 0 6 4"><path d="M0 0l2.5 3 2.5-3z" fill="#8a94a4"/></svg>
<div style="left:292px;top:502px;width:333px;height:9px;background:#4f5968;"></div>
<div style="left:303.5px;top:504.5px;width:260.5px;height:6px;background:#7a89a2;"></div>
<svg style="left:295px;top:504.5px" width="4" height="6" viewBox="0 0 4 6"><path d="M3.5 0l-3 2.8 3 2.8z" fill="#9aa3b2"/></svg>
<svg style="left:613px;top:504.5px" width="4" height="6" viewBox="0 0 4 6"><path d="M0 0l3 2.8-3 2.8z" fill="#9aa3b2"/></svg>
<div style="left:620px;top:502px;width:12px;height:11px;background:#1b2029;"></div>
<div style="left:291px;top:520px;width:341px;height:17px;background:#046e85;"></div>
<svg style="left:295px;top:522px" width="122" height="16"><text x="0.6" y="9.2" font-size="7.4" fill="#e6e6e6" transform="rotate(0.03 0.6 9.2)" textLength="117.3">Aliases. Drag mapped objects here.</text></svg>
<div style="left:291px;top:538px;width:341px;height:73px;background:#151a22;border:1px solid #3a4452;"></div>
<div style="left:306px;top:567px;width:326px;height:15px;background:#3c4b64;border:1px solid #56667f;"></div>
<div style="left:313px;top:139px;width:1px;height:364px;background:#4a5361;"></div>
<div style="left:328px;top:142px;width:1px;height:361px;background:#4a5361;"></div>
<div style="left:342px;top:157px;width:1px;height:8px;background:#4a5361;"></div>
<div style="left:342px;top:186px;width:1px;height:23px;background:#4a5361;"></div>
<div style="left:342px;top:229px;width:1px;height:9px;background:#4a5361;"></div>
<div style="left:342px;top:258px;width:1px;height:9px;background:#4a5361;"></div>
<div style="left:342px;top:287px;width:1px;height:216px;background:#4a5361;"></div>
<div style="left:357px;top:301px;width:1px;height:202px;background:#4a5361;"></div>
<div style="left:371px;top:316px;width:1px;height:187px;background:#4a5361;"></div>
<div style="left:386px;top:330px;width:1px;height:9px;background:#4a5361;"></div>
<div style="left:400px;top:345px;width:1px;height:8px;background:#4a5361;"></div>
<div style="left:414px;top:359px;width:1px;height:52px;background:#4a5361;"></div>
<div style="left:429px;top:374px;width:1px;height:8px;background:#4a5361;"></div>
<div style="left:443px;top:388px;width:1px;height:9px;background:#4a5361;"></div>
<div style="left:429px;top:417px;width:1px;height:9px;background:#4a5361;"></div>
<div style="left:443px;top:432px;width:1px;height:8px;background:#4a5361;"></div>
<div style="left:458px;top:446px;width:1px;height:38px;background:#4a5361;"></div>
<div style="left:472px;top:461px;width:1px;height:8px;background:#4a5361;"></div>
<div style="left:472px;top:490px;width:1px;height:8px;background:#4a5361;"></div>
<svg style="left:297.3px;top:119.4px" width="5" height="5" viewBox="0 0 5 5"><path d="M4.6 0.2v4.3h-4.3z" fill="#dedede"/></svg>
<div style="left:302px;top:120px;width:4px;height:1px;background:#4a5361;"></div>
<svg style="left:307px;top:115px" width="16" height="16"><text x="0.0" y="9.3" font-size="7.4" fill="#e6e6e6" transform="rotate(0.03 0.0 9.3)" textLength="11.6">Sys</text></svg>
<svg style="left:311.7px;top:133.9px" width="5" height="5" viewBox="0 0 5 5"><path d="M4.6 0.2v4.3h-4.3z" fill="#dedede"/></svg>
<div style="left:317px;top:135px;width:4px;height:1px;background:#4a5361;"></div>
<svg style="left:321px;top:129px" width="30" height="16"><text x="0.43" y="9.77" font-size="7.4" fill="#e6e6e6" transform="rotate(0.03 0.43 9.77)" textLength="26">NuPoint</text></svg>
<svg style="left:326.2px;top:148.3px" width="5" height="5" viewBox="0 0 5 5"><path d="M4.6 0.2v4.3h-4.3z" fill="#dedede"/></svg>
<div style="left:331px;top:149px;width:4px;height:1px;background:#4a5361;"></div>
<svg style="left:335px;top:144px" width="52" height="16"><text x="0.86" y="9.23" font-size="7.4" fill="#e6e6e6" transform="rotate(0.03 0.86 9.23)" textLength="47.3">dlgCSINuPoint</text></svg>
<div style="left:343px;top:165px;width:6px;height:1px;background:#4a5361;"></div>
<svg style="left:350px;top:158px" width="25" height="16"><text x="0.29" y="9.7" font-size="7.4" fill="#e6e6e6" transform="rotate(0.03 0.29 9.7)" textLength="20.6">btnOK</text></svg>
<svg style="left:326.2px;top:177.3px" width="5" height="5" viewBox="0 0 5 5"><path d="M4.6 0.2v4.3h-4.3z" fill="#dedede"/></svg>
<div style="left:331px;top:178px;width:4px;height:1px;background:#4a5361;"></div>
<svg style="left:335px;top:173px" width="56" height="16"><text x="0.86" y="9.16" font-size="7.4" fill="#e6e6e6" transform="rotate(0.03 0.86 9.16)" textLength="51.2">dlgCSINuPoint2</text></svg>
<div style="left:343px;top:194px;width:6px;height:1px;background:#4a5361;"></div>
<svg style="left:350px;top:187px" width="25" height="16"><text x="0.29" y="9.63" font-size="7.4" fill="#e6e6e6" transform="rotate(0.03 0.29 9.63)" textLength="20.6">btnOK</text></svg>
<div style="left:343px;top:208px;width:6px;height:1px;background:#4a5361;"></div>
<svg style="left:350px;top:201px" width="27" height="16"><text x="0.29" y="10.09" font-size="7.4" fill="#e6e6e6" transform="rotate(0.03 0.29 10.09)" textLength="22.7">btnYes</text></svg>
<svg style="left:326.2px;top:220.7px" width="5" height="5" viewBox="0 0 5 5"><path d="M4.6 0.2v4.3h-4.3z" fill="#dedede"/></svg>
<div style="left:331px;top:222px;width:4px;height:1px;background:#4a5361;"></div>
<svg style="left:335px;top:216px" width="56" height="16"><text x="0.86" y="9.56" font-size="7.4" fill="#e6e6e6" transform="rotate(0.03 0.86 9.56)" textLength="51.2">DropDownForm</text></svg>
<div style="left:343px;top:237px;width:6px;height:1px;background:#4a5361;"></div>
<svg style="left:350px;top:230px" width="68" height="16"><text x="0.29" y="10.02" font-size="7.4" fill="#e6e6e6" transform="rotate(0.03 0.29 10.02)" textLength="63.5">ValueListDropDown</text></svg>
<svg style="left:326.2px;top:249.6px" width="5" height="5" viewBox="0 0 5 5"><path d="M4.6 0.2v4.3h-4.3z" fill="#dedede"/></svg>
<div style="left:331px;top:251px;width:4px;height:1px;background:#4a5361;"></div>
<svg style="left:335px;top:245px" width="60" height="16"><text x="0.86" y="9.49" font-size="7.4" fill="#e6e6e6" transform="rotate(0.03 0.86 9.49)" textLength="55.9">DropDownHolder</text></svg>
<div style="left:343px;top:266px;width:6px;height:1px;background:#4a5361;"></div>
<svg style="left:350px;top:259px" width="56" height="16"><text x="0.29" y="9.95" font-size="7.4" fill="#e6e6e6" transform="rotate(0.03 0.29 9.95)" textLength="52">GridViewListBox</text></svg>
<svg style="left:326.2px;top:278.5px" width="5" height="5" viewBox="0 0 5 5"><path d="M4.6 0.2v4.3h-4.3z" fill="#dedede"/></svg>
<div style="left:331px;top:280px;width:4px;height:1px;background:#4a5361;"></div>
<svg style="left:335px;top:274px" width="47" height="16"><text x="0.86" y="9.42" font-size="7.4" fill="#e6e6e6" transform="rotate(0.03 0.86 9.42)" textLength="42.6">frmContainer</text></svg>
<svg style="left:340.6px;top:293.0px" width="5" height="5" viewBox="0 0 5 5"><path d="M4.6 0.2v4.3h-4.3z" fill="#dedede"/></svg>
<div style="left:346px;top:294px;width:4px;height:1px;background:#4a5361;"></div>
<svg style="left:350px;top:288px" width="34" height="16"><text x="0.29" y="9.88" font-size="7.4" fill="#e6e6e6" transform="rotate(0.03 0.29 9.88)" textLength="29.9">MdiClient</text></svg>
<svg style="left:355.0px;top:307.4px" width="5" height="5" viewBox="0 0 5 5"><path d="M4.6 0.2v4.3h-4.3z" fill="#dedede"/></svg>
<div style="left:360px;top:308px;width:4px;height:1px;background:#4a5361;"></div>
<svg style="left:364px;top:303px" width="56" height="16"><text x="0.72" y="9.35" font-size="7.4" fill="#e6e6e6" transform="rotate(0.03 0.72 9.35)" textLength="52">AdminContainer</text></svg>
<svg style="left:369.4px;top:321.9px" width="5" height="5" viewBox="0 0 5 5"><path d="M4.6 0.2v4.3h-4.3z" fill="#dedede"/></svg>
<div style="left:375px;top:323px;width:4px;height:1px;background:#4a5361;"></div>
<svg style="left:379px;top:317px" width="53" height="16"><text x="0.15" y="9.81" font-size="7.4" fill="#e6e6e6" transform="rotate(0.03 0.15 9.81)" textLength="48.3">pnlAdminViews</text></svg>
<svg style="left:383.9px;top:336.4px" width="5" height="5" viewBox="0 0 5 5"><path d="M4.6 0.2v4.3h-4.3z" fill="#dedede"/></svg>
<div style="left:389px;top:337px;width:4px;height:1px;background:#4a5361;"></div>
<svg style="left:393px;top:332px" width="52" height="16"><text x="0.58" y="9.28" font-size="7.4" fill="#e6e6e6" transform="rotate(0.03 0.58 9.28)" textLength="47.3">ctlBankParams</text></svg>
<svg style="left:398.3px;top:350.8px" width="5" height="5" viewBox="0 0 5 5"><path d="M4.6 0.2v4.3h-4.3z" fill="#dedede"/></svg>
<div style="left:404px;top:352px;width:4px;height:1px;background:#4a5361;"></div>
<svg style="left:408px;top:346px" width="29" height="16"><text x="0.01" y="9.74" font-size="7.4" fill="#e6e6e6" transform="rotate(0.03 0.01 9.74)" textLength="24.9">pnlMain</text></svg>
<svg style="left:412.7px;top:365.3px" width="5" height="5" viewBox="0 0 5 5"><path d="M4.6 0.2v4.3h-4.3z" fill="#dedede"/></svg>
<div style="left:418px;top:366px;width:4px;height:1px;background:#4a5361;"></div>
<svg style="left:422px;top:361px" width="50" height="16"><text x="0.44" y="9.21" font-size="7.4" fill="#e6e6e6" transform="rotate(0.03 0.44 9.21)" textLength="45.4">pnlCommands</text></svg>
<svg style="left:427.2px;top:379.8px" width="5" height="5" viewBox="0 0 5 5"><path d="M4.6 0.2v4.3h-4.3z" fill="#dedede"/></svg>
<div style="left:432px;top:381px;width:4px;height:1px;background:#4a5361;"></div>
<svg style="left:436px;top:375px" width="43" height="16"><text x="0.87" y="9.67" font-size="7.4" fill="#e6e6e6" transform="rotate(0.03 0.87 9.67)" textLength="38.6">ugrpBottom</text></svg>
<div style="left:444px;top:396px;width:6px;height:1px;background:#4a5361;"></div>
<svg style="left:451px;top:390px" width="32" height="16"><text x="0.3" y="9.14" font-size="7.4" fill="#e6e6e6" transform="rotate(0.03 0.3 9.14)" textLength="27.4">btnSave</text></svg>
<svg style="left:412.7px;top:408.7px" width="5" height="5" viewBox="0 0 5 5"><path d="M4.6 0.2v4.3h-4.3z" fill="#dedede"/></svg>
<div style="left:418px;top:410px;width:4px;height:1px;background:#4a5361;"></div>
<svg style="left:422px;top:404px" width="41" height="16"><text x="0.44" y="9.6" font-size="7.4" fill="#e6e6e6" transform="rotate(0.03 0.44 9.6)" textLength="36.4">pnlSettings</text></svg>
<svg style="left:427.2px;top:423.2px" width="5" height="5" viewBox="0 0 5 5"><path d="M4.6 0.2v4.3h-4.3z" fill="#dedede"/></svg>
<div style="left:432px;top:424px;width:4px;height:1px;background:#4a5361;"></div>
<svg style="left:436px;top:418px" width="39" height="16"><text x="0.87" y="10.07" font-size="7.4" fill="#e6e6e6" transform="rotate(0.03 0.87 10.07)" textLength="35">pnlOptions</text></svg>
<svg style="left:441.6px;top:437.6px" width="5" height="5" viewBox="0 0 5 5"><path d="M4.6 0.2v4.3h-4.3z" fill="#dedede"/></svg>
<div style="left:447px;top:439px;width:4px;height:1px;background:#4a5361;"></div>
<svg style="left:451px;top:433px" width="54" height="16"><text x="0.3" y="9.53" font-size="7.4" fill="#e6e6e6" transform="rotate(0.03 0.3 9.53)" textLength="49.4">pgBankOptions</text></svg>
<svg style="left:456.0px;top:452.1px" width="5" height="5" viewBox="0 0 5 5"><path d="M4.6 0.2v4.3h-4.3z" fill="#dedede"/></svg>
<div style="left:461px;top:453px;width:4px;height:1px;background:#4a5361;"></div>
<svg style="left:465px;top:447px" width="48" height="16"><text x="0.73" y="10.0" font-size="7.4" fill="#e6e6e6" transform="rotate(0.03 0.73 10.0)" textLength="43.7">DocComment</text></svg>
<div style="left:473px;top:469px;width:6px;height:1px;background:#4a5361;"></div>
<svg style="left:480px;top:462px" width="22" height="16"><text x="0.16" y="9.46" font-size="7.4" fill="#e6e6e6" transform="rotate(0.03 0.16 9.46)" textLength="17.7">Label</text></svg>
<svg style="left:456.0px;top:481.0px" width="5" height="5" viewBox="0 0 5 5"><path d="M4.6 0.2v4.3h-4.3z" fill="#dedede"/></svg>
<div style="left:461px;top:482px;width:4px;height:1px;background:#4a5361;"></div>
<svg style="left:465px;top:476px" width="62" height="16"><text x="0.73" y="9.93" font-size="7.4" fill="#e6e6e6" transform="rotate(0.03 0.73 9.93)" textLength="57.4">PropertyGridView</text></svg>
<div style="left:473px;top:497px;width:6px;height:1px;background:#4a5361;"></div>
<svg style="left:480px;top:491px" width="45" height="16"><text x="0.16" y="9.39" font-size="7.4" fill="#e6e6e6" transform="rotate(0.03 0.16 9.39)" textLength="40.7">GridViewEdit</text></svg>
<div style="left:299px;top:549px;width:1px;height:23px;background:#4a5361;"></div>
<svg style="left:298.0px;top:543.0px" width="4" height="6" viewBox="0 0 4 6"><path d="M0 0l3.5 3-3.5 3z" fill="#e6e6e6"/></svg>
<div style="left:302px;top:546px;width:4px;height:1px;background:#4a5361;"></div>
<svg style="left:307px;top:539px" width="30" height="16"><text x="0" y="9.6" font-size="7.4" fill="#e6e6e6" transform="rotate(0.03 0 9.6)" textLength="26">NuPoint</text></svg>
<svg style="left:298.0px;top:557.4px" width="4" height="6" viewBox="0 0 4 6"><path d="M0 0l3.5 3-3.5 3z" fill="#e6e6e6"/></svg>
<div style="left:302px;top:560px;width:4px;height:1px;background:#4a5361;"></div>
<svg style="left:307px;top:553px" width="76" height="16"><text x="0" y="10.0" font-size="7.4" fill="#e6e6e6" transform="rotate(0.03 0 10.0)" textLength="71.8">NuPointCommunicator</text></svg>
<svg style="left:298.0px;top:571.8px" width="4" height="6" viewBox="0 0 4 6"><path d="M0 0l3.5 3-3.5 3z" fill="#e6e6e6"/></svg>
<div style="left:302px;top:574px;width:4px;height:1px;background:#4a5361;"></div>
<svg style="left:307px;top:568px" width="75" height="16"><text x="0" y="9.4" font-size="7.4" fill="#e6e6e6" transform="rotate(0.03 0 9.4)" textLength="70.3">NuPointEnvironments</text></svg>
<svg style="left:643px;top:85px" width="100" height="16"><text x="0" y="9.1" font-size="7.4" fill="#e6e6e6" transform="rotate(0.03 0 9.1)" textLength="95.4">Aliases.NuPointEnvironments</text></svg>
<div style="left:638px;top:100px;width:361px;height:350.5px;background:#151a22;border:1px solid #56606f;border-bottom:none;"></div>
<div style="left:639px;top:102px;width:69px;height:13px;background:#444444;"></div>
<div style="left:708px;top:102px;width:291px;height:13px;background:#161b23;border:1px solid #6d727b;border-right:none;"></div>
<svg style="left:654px;top:102px" width="48" height="16"><text x="0" y="9.3" font-size="7.4" fill="#e6e6e6" transform="rotate(0.03 0 9.3)" textLength="43.9">ProcessName</text></svg>
<svg style="left:709px;top:102px" width="75" height="16"><text x="0.4" y="9.3" font-size="7.4" fill="#e6e6e6" transform="rotate(0.03 0.4 9.3)" textLength="70.3">NuPointEnvironments</text></svg>
<div style="left:638px;top:450.5px;width:44px;height:20.5px;background:#1f2530;border:1px solid #56606f;border-top:none;"></div>
<div style="left:682px;top:450.5px;width:85px;height:19px;background:#181d25;border:1px solid #4a5565;border-left:none;"></div>
<svg style="left:642px;top:454px" width="38" height="16"><text x="0.7" y="9.5" font-size="7.4" fill="#e6e6e6" transform="rotate(0.03 0.7 9.5)" textLength="33.4"><tspan text-decoration="underline">P</tspan>roperties</text></svg>
<svg style="left:684px;top:453px" width="82" height="16"><text x="0.5" y="9.5" font-size="7.4" fill="#e6e6e6" transform="rotate(0.03 0.5 9.5)" textLength="77.2">Re<tspan text-decoration="underline">q</tspan>uired Children (0/1)</text></svg>
<div style="left:638px;top:476px;width:361px;height:135px;background:#3d4d66;border:1px solid #4a5565;"></div>
<div style="left:639px;top:477px;width:359px;height:19px;background:#1f2530;"></div>
<div style="left:641.6px;top:481.6px;width:1.4px;height:1.4px;background:#626b7a;"></div>
<div style="left:641.6px;top:484.5px;width:1.4px;height:1.4px;background:#626b7a;"></div>
<div style="left:641.6px;top:487.40000000000003px;width:1.4px;height:1.4px;background:#626b7a;"></div>
<div style="left:641.6px;top:490.3px;width:1.4px;height:1.4px;background:#626b7a;"></div>
<svg style="left:648px;top:480px" width="14" height="14" viewBox="0 0 14 14"><path d="M2.4000000000000004 6.4a4.6 4.6 0 0 1 7.999999999999999 -3.1999999999999997" fill="none" stroke="#1ba1e2" stroke-width="2.2"/><path d="M12.4 1.8000000000000003v4.4h-4.4z" fill="#1ba1e2"/><path d="M11.6 7.6a4.6 4.6 0 0 1 -7.999999999999999 3.1999999999999997" fill="none" stroke="#1ba1e2" stroke-width="2.2"/><path d="M1.6000000000000003 12.2v-4.4h4.4z" fill="#1ba1e2"/></svg>
<svg style="left:665px;top:481px" width="12" height="13" viewBox="0 0 12 13"><path d="M1 3h9.5M4 3v-1.6h3.5v1.6M2 3.4l.6 8.6h6.3l.6-8.6" fill="none" stroke="#4a515c" stroke-width="1.1"/><path d="M4.4 5v5.4M5.8 5v5.4M7.2 5v5.4" stroke="#4a515c" stroke-width="0.7"/></svg>
<div style="left:681px;top:479px;width:1px;height:16px;background:#39424f;"></div>
<svg style="left:685px;top:481px" width="13" height="13" viewBox="0 0 13 13"><circle cx="5.2" cy="5" r="4" fill="none" stroke="#4a515c" stroke-width="1.3"/><path d="M2.6 8.2l-2 3.4" stroke="#4a515c" stroke-width="1.8"/><circle cx="8.6" cy="8.8" r="2.6" fill="#4a515c"/></svg>
<svg style="left:701px;top:481px" width="13" height="13" viewBox="0 0 13 13"><circle cx="5.2" cy="5" r="4" fill="none" stroke="#4a515c" stroke-width="1.3"/><path d="M2.6 8.2l-2 3.4" stroke="#4a515c" stroke-width="1.8"/><circle cx="8.6" cy="8.8" r="2.6" fill="#4a515c"/></svg>
<div style="left:715px;top:479px;width:16px;height:16px;background:#3b3b3b;border:1px solid #616b7a;"></div>
<svg style="left:717.5px;top:481px" width="13" height="13" viewBox="0 0 13 13"><circle cx="5.2" cy="5" r="4" fill="none" stroke="#5a5a5a" stroke-width="1.3"/><path d="M2.6 8.2l-2 3.4" stroke="#5a5a5a" stroke-width="1.8"/><circle cx="8.6" cy="8.8" r="2.4" fill="#5a5a5a"/></svg>
<div style="left:731px;top:479px;width:16px;height:16px;background:#1f2530;border:1px solid #616b7a;"></div>
<svg style="left:733.5px;top:481.5px" width="11" height="11" viewBox="0 0 11 11"><rect x="0" y="0" width="11" height="11" fill="#1ba1e2"/><path d="M0.5 0.5l10 10M10.5 0.5l-10 10" stroke="#1f2530" stroke-width="2.2"/><path d="M3 3l5 5M8 3l-5 5" stroke="#f2f2f2" stroke-width="1.3"/></svg>
<svg style="left:0;top:0;filter:drop-shadow(1px 1px 1.2px rgba(0,0,0,.55))" width="998" height="610" viewBox="0 0 998 610" fill="#f64242"><rect x="184.10" y="253.00" width="6.6" height="6.6" transform="rotate(-46.36 187.40 256.30)"/><rect x="193.60" y="243.03" width="6.6" height="6.6" transform="rotate(-46.36 196.91 246.33)"/><rect x="203.11" y="233.07" width="6.6" height="6.6" transform="rotate(-46.36 206.41 236.37)"/><rect x="212.62" y="223.10" width="6.6" height="6.6" transform="rotate(-46.36 215.92 226.40)"/><rect x="222.12" y="213.13" width="6.6" height="6.6" transform="rotate(-46.36 225.42 216.43)"/><rect x="231.62" y="203.16" width="6.6" height="6.6" transform="rotate(-46.36 234.93 206.47)"/><rect x="241.13" y="193.20" width="6.6" height="6.6" transform="rotate(-46.36 244.43 196.50)"/><rect x="250.63" y="183.23" width="6.6" height="6.6" transform="rotate(-46.36 253.94 186.53)"/><rect x="260.14" y="173.26" width="6.6" height="6.6" transform="rotate(-46.36 263.44 176.56)"/><rect x="269.64" y="163.30" width="6.6" height="6.6" transform="rotate(-46.36 272.94 166.60)"/><rect x="279.15" y="153.33" width="6.6" height="6.6" transform="rotate(-46.36 282.45 156.63)"/><rect x="288.66" y="143.36" width="6.6" height="6.6" transform="rotate(-46.36 291.96 146.66)"/><rect x="298.16" y="133.40" width="6.6" height="6.6" transform="rotate(-46.36 301.46 136.70)"/><rect x="307.67" y="123.43" width="6.6" height="6.6" transform="rotate(-46.36 310.97 126.73)"/><rect x="317.17" y="113.46" width="6.6" height="6.6" transform="rotate(-46.36 320.47 116.76)"/><rect x="326.68" y="103.50" width="6.6" height="6.6" transform="rotate(-46.36 329.98 106.80)"/><rect x="336.18" y="93.53" width="6.6" height="6.6" transform="rotate(-46.36 339.48 96.83)"/><rect x="345.69" y="83.56" width="6.6" height="6.6" transform="rotate(-46.36 348.99 86.86)"/><rect x="355.19" y="73.59" width="6.6" height="6.6" transform="rotate(-46.36 358.49 76.89)"/><rect x="364.69" y="63.63" width="6.6" height="6.6" transform="rotate(-46.36 368.00 66.93)"/><polygon points="168,276.6 175,254.8 189.3,268.6"/><polygon points="382.6,51 361.5,59.3 377.3,72"/></svg>
<svg style="left:2.3px;top:85.6px" width="10" height="14" viewBox="0 0 10 14"><path d="M0.7 0.8v10.4l2.5-2.3 1.8 4 1.7-.8-1.8-3.9h3.4z" fill="#f2f2f2" stroke="#000" stroke-width="1.2" stroke-linejoin="round"/></svg>
<div style="left:287px;top:78px;width:338px;height:437px;border:5px solid #f64242;filter:drop-shadow(1px 1px 1.2px rgba(0,0,0,.55));"></div>
<div style="left:383px;top:37px;width:97px;height:26px;border:5px solid #f64242;filter:drop-shadow(1px 1px 1.2px rgba(0,0,0,.55));"></div>
<div style="left:18.5px;top:274px;width:135px;height:20px;border:5px solid #f64242;filter:drop-shadow(1px 1px 1.2px rgba(0,0,0,.55));"></div>
</body></html>
